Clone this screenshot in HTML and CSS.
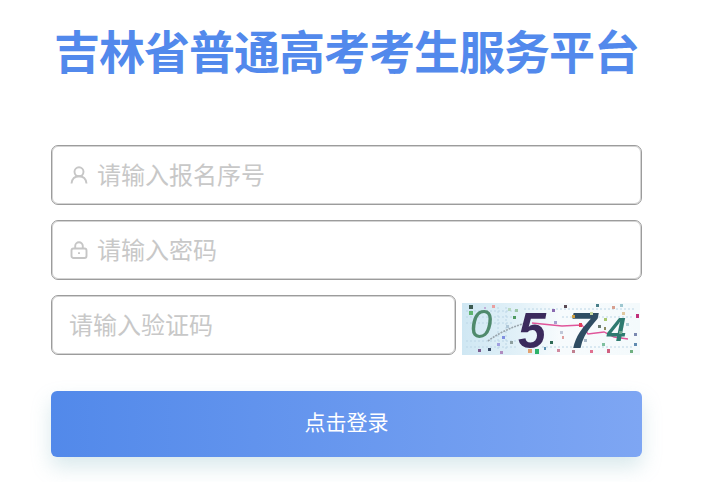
FILE: index.html
```html
<!DOCTYPE html>
<html lang="zh">
<head>
<meta charset="utf-8">
<title>吉林省普通高考考生服务平台</title>
<link rel="stylesheet" href="styles.css">
</head>
<body>
<main class="login">
  <h1 class="title">吉林省普通高考考生服务平台</h1>
  <form class="form">
    <label class="field">
      <svg class="icon" viewBox="0 0 18 18" width="18" height="18" fill="none" stroke="#c6c6c6" stroke-width="1.900"><circle cx="9" cy="5.800" r="4.500"/><path d="M1.500 17.500c.5-4.300 3.300-7.200 7.500-7.200s7 2.900 7.500 7.200"/></svg>
      <input class="input" placeholder="请输入报名序号">
    </label>
    <label class="field">
      <svg class="icon" viewBox="0 0 18 18" width="18" height="18" fill="none" stroke="#c6c6c6" stroke-width="1.900"><rect x="1.500" y="7.500" width="15" height="9.500" rx="2"/><path d="M5.200 7.500V5a3.800 3.800 0 0 1 7.600 0v2.500"/><path d="M9 11.300v1.800"/></svg>
      <input class="input" placeholder="请输入密码">
    </label>
    <div class="captcha-row">
      <label class="field field-code">
        <input class="input" placeholder="请输入验证码">
      </label>
      <svg class="captcha" viewBox="0 0 178 52" width="178" height="52" role="img" aria-label="验证码">
        <defs>
          <linearGradient id="wash" x1="0" x2="1" y1="0" y2="0">
            <stop offset="0" stop-color="#cfe7f3"/>
            <stop offset="0.32" stop-color="#e2f1f8"/>
            <stop offset="0.55" stop-color="#f7fbfd"/>
            <stop offset="1" stop-color="#f4fafc"/>
          </linearGradient>
        </defs>
        <rect width="178" height="52" fill="url(#wash)"/>
        <g fill="none" stroke="#bcd6e6" stroke-width="1" stroke-dasharray="2 2">
          <path d="M4 8h50M4 14h50M4 20h46M4 38h50M4 44h50M36 4v44M44 4v44"/>
          <path d="M62 6h110M80 44h90M100 14h70"/>
        </g>
        <path d="M26 38 Q42 26 64 20" fill="none" stroke="#9aa5ad" stroke-width="1.600" stroke-dasharray="2 1"/>
        <path d="M70 20 L100 23 L120 22 L126 31 L142 29 L152 34 L166 36" fill="none" stroke="#e0559a" stroke-width="1.300"/>
        <g class="digits">
          <text class="digit d0" x="8" y="35">0</text>
          <text class="digit d5" x="56" y="45">5</text>
          <text class="digit d7" x="107" y="45">7</text>
          <text class="digit d4" x="145" y="38">4</text>
        </g>
        <g>
          <rect x="7" y="2" width="4" height="4" fill="#3c5a50"/>
          <rect x="7" y="8" width="4" height="4" fill="#5fb56f"/>
          <rect x="30" y="2" width="3" height="3" fill="#e9a0a0"/>
          <rect x="51" y="13" width="3" height="3" fill="#4f9a62"/>
          <rect x="53" y="6" width="3" height="3" fill="#9cc7a8"/>
          <rect x="16" y="46" width="3" height="3" fill="#7b5c8f"/>
          <rect x="26" y="45" width="3" height="3" fill="#3a4c66"/>
          <rect x="38" y="48" width="3" height="3" fill="#b08cc0"/>
          <rect x="48" y="38" width="3" height="3" fill="#8ea0a0"/>
          <rect x="66" y="46" width="4" height="4" fill="#e2a070"/>
          <rect x="73" y="46" width="4" height="5" fill="#2fb36a"/>
          <rect x="88" y="38" width="3" height="3" fill="#2f6a55"/>
          <rect x="82" y="44" width="2" height="3" fill="#5a8fb0"/>
          <rect x="90" y="6" width="3" height="3" fill="#8a6ab0"/>
          <rect x="102" y="2" width="3" height="3" fill="#5a4a55"/>
          <rect x="117" y="20" width="3" height="4" fill="#e0405a"/>
          <rect x="110" y="12" width="3" height="3" fill="#d0a040"/>
          <rect x="134" y="1" width="3" height="3" fill="#4a7f8a"/>
          <rect x="150" y="3" width="3" height="3" fill="#d8a090"/>
          <rect x="158" y="1" width="3" height="3" fill="#9ec7d0"/>
          <rect x="174" y="11" width="3" height="4" fill="#c0307a"/>
          <rect x="172" y="40" width="3" height="3" fill="#5f8ab0"/>
          <rect x="172" y="30" width="3" height="3" fill="#7a88b0"/>
          <rect x="168" y="47" width="3" height="3" fill="#6fb080"/>
          <rect x="145" y="46" width="3" height="4" fill="#d06080"/>
          <rect x="128" y="47" width="3" height="3" fill="#e07090"/>
          <rect x="110" y="47" width="3" height="3" fill="#c08090"/>
          <rect x="95" y="46" width="3" height="3" fill="#d08aa0"/>
          <rect x="122" y="36" width="3" height="3" fill="#a8b8c8"/>
          <rect x="140" y="40" width="3" height="3" fill="#80c0a0"/>
          <rect x="157" y="28" width="3" height="3" fill="#70a890"/>
          <rect x="40" y="33" width="3" height="3" fill="#8090e0"/>
          <rect x="35" y="40" width="3" height="3" fill="#a0a0e0"/>
          <rect x="98" y="28" width="3" height="3" fill="#c0c8d8"/>
          <rect x="142" y="15" width="3" height="3" fill="#a8c870"/>
          <rect x="92" y="18" width="3" height="3" fill="#a8a0d0"/>
          <rect x="100" y="33" width="2" height="3" fill="#e0a0a0"/>
          <rect x="136" y="22" width="3" height="3" fill="#6a7a70"/>
          <rect x="142" y="24" width="2" height="3" fill="#8a8a60"/>
          <rect x="128" y="9" width="3" height="3" fill="#c8d8a0"/>
          <rect x="164" y="20" width="3" height="3" fill="#b0d0d8"/>
          <rect x="160" y="9" width="3" height="3" fill="#e0c8a0"/>
          <rect x="44" y="22" width="3" height="3" fill="#b0c8d8"/>
          <rect x="22" y="4" width="2" height="2" fill="#c0b0d8"/>
          <rect x="46" y="5" width="3" height="3" fill="#b8d8c0"/>
        </g>
      </svg>
    </div>
    <button class="submit" type="button">点击登录</button>
  </form>
</main>
</body>
</html>
```

FILE: styles.css
```css
* {
  box-sizing: border-box;
}

html,
body {
  margin: 0;
  background: #fff;
}

body {
  overflow: hidden;
  height: 482px;
  font-family: "Noto Sans CJK SC", "Liberation Sans", sans-serif;
}

.login {
  width: 591px;
  margin-left: 51px;
}

.title {
  margin: 0;
  padding-top: 18px;
  height: 145px;
  font-size: 46px;
  line-height: 62px;
  letter-spacing: -1px;
  font-weight: 700;
  color: #5289ec;
  text-align: center;
  white-space: nowrap;
}

.form {
  display: flex;
  flex-direction: column;
}

.field {
  display: flex;
  align-items: center;
  gap: 9px;
  height: 60px;
  margin-bottom: 15px;
  padding: 0 18px;
  border: 1px solid #9c9c9c;
  border-radius: 7px;
  box-shadow: inset 0 0 0 1px rgba(170, 170, 170, 0.5);
  background: #fff;
}

.icon {
  flex: none;
}

.input {
  flex: 1;
  min-width: 0;
  border: 0;
  outline: 0;
  padding: 0 0 3px;
  background: transparent;
  font-family: inherit;
  font-size: 24px;
  line-height: 34px;
  color: #333;
}

.input::placeholder {
  color: #c8c8c8;
  opacity: 1;
}

.captcha-row {
  display: flex;
  align-items: flex-end;
  gap: 6px;
}

.field-code {
  width: 405px;
  flex: none;
  margin-bottom: 0;
  padding-left: 17px;
}

.captcha {
  flex: none;
  display: block;
  overflow: visible;
  filter: blur(0.6px);
}

.digit {
  font-family: "Liberation Sans", sans-serif;
  font-style: italic;
  font-size: 48px;
}

.d0 {
  font-size: 40px;
  fill: #4f8a6c;
}

.d5 {
  font-size: 50px;
  font-weight: 700;
  fill: #3b2a5c;
}

.d7 {
  font-size: 50px;
  font-weight: 700;
  fill: #2f4d63;
}

.d4 {
  font-size: 34px;
  font-weight: 700;
  fill: #2e7a70;
}

.submit {
  height: 66px;
  margin-top: 36px;
  padding: 0 0 7px;
  border: 0;
  border-radius: 6px;
  background: linear-gradient(90deg, #5289ea, #7ea6f3);
  box-shadow: 0 10px 20px rgba(120, 175, 185, 0.28);
  font-family: inherit;
  font-size: 21px;
  color: #fff;
}
```
